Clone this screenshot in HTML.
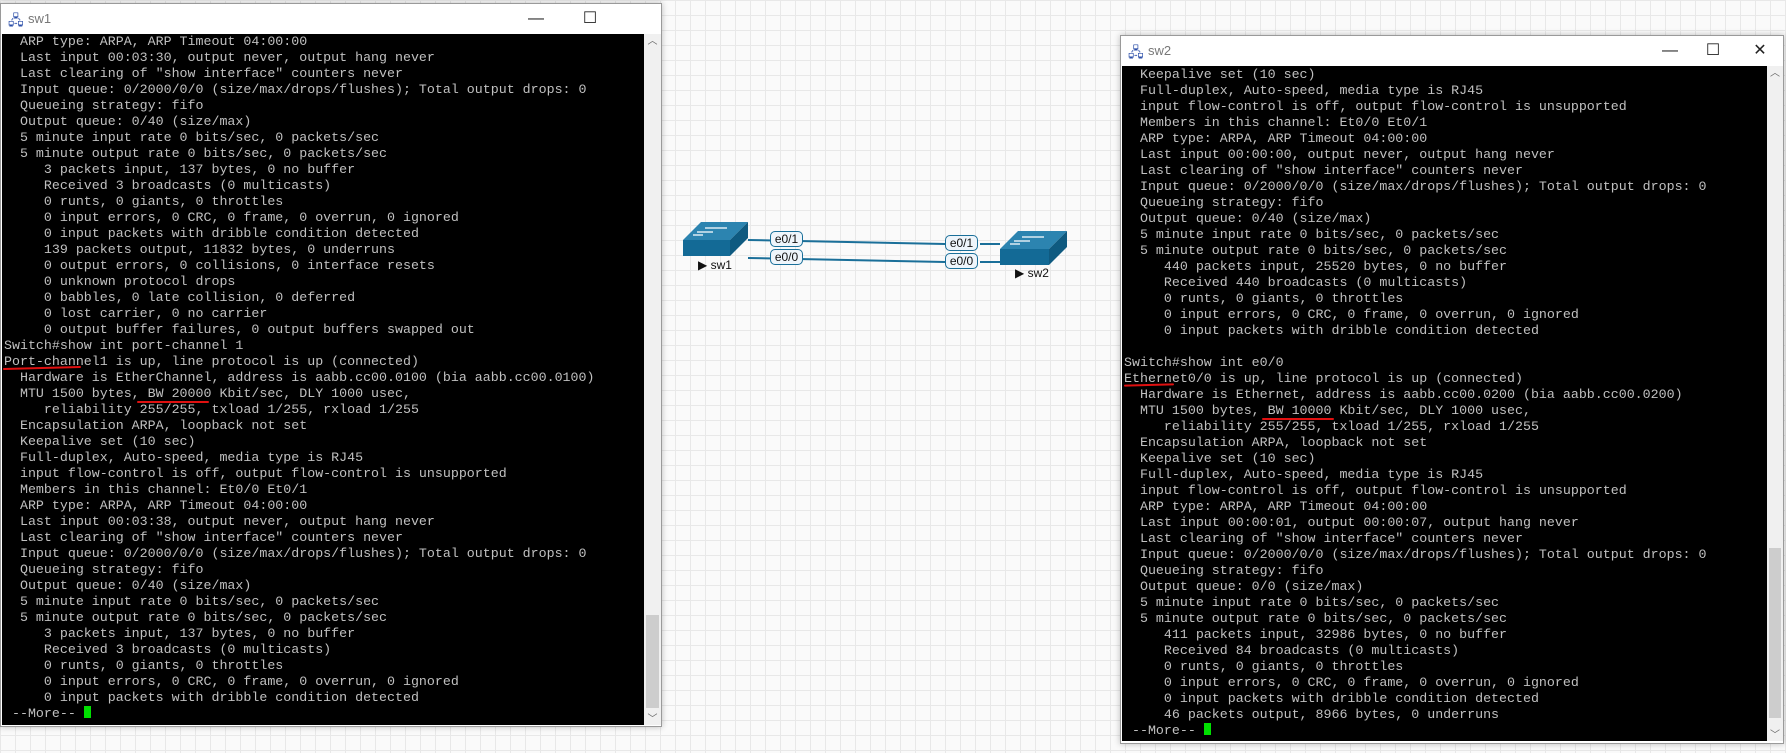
<!DOCTYPE html>
<html><head><meta charset="utf-8"><style>
body{margin:0;width:1786px;height:753px;overflow:hidden;position:relative;font-family:"Liberation Sans",sans-serif;
background-color:#fafafa;background-image:linear-gradient(#e8e8e8 1px,transparent 1px),linear-gradient(90deg,#e8e8e8 1px,transparent 1px);background-size:15px 15px;}
.win{position:absolute;background:#fff;border:1px solid #9a9a9a;box-shadow:0 0 6px rgba(0,0,0,.25);}
.title{position:absolute;left:0;right:0;top:0;height:30px;background:#fff;}
.title .t{position:absolute;left:27px;top:7px;font-size:13px;color:#777;}
.btn{position:absolute;top:0;height:30px;width:40px;font-size:16px;color:#222;text-align:center;line-height:30px}
.term{position:absolute;background:#000;overflow:hidden;}
.term pre{margin:0;font-family:"Liberation Mono",monospace;font-size:13.3px;line-height:16px;color:#c0c0c0;padding-left:2px;}
.sb{position:absolute;background:#f0f0f0;}
.thumb{position:absolute;left:2px;right:2px;background:#cdcdcd;}
.cur{display:inline-block;width:7px;height:12px;background:#00e000;vertical-align:-1px}
.red{position:absolute;height:2px;background:#e01010;border-radius:1px}
.lbl{position:absolute;font-size:12px;border:1.5px solid #1a6f99;border-radius:5px;background:#eef5fb;width:31px;height:14px;line-height:14px;text-align:center;color:#111}
.nm{position:absolute;font-size:12px;color:#111}
</style></head><body>

<svg style="position:absolute;left:0;top:0" width="1786" height="753">
<line x1="748" y1="240" x2="945" y2="244" stroke="#1a6f99" stroke-width="2"/>
<line x1="748" y1="258" x2="945" y2="262" stroke="#1a6f99" stroke-width="2"/>
<line x1="980" y1="244" x2="1000" y2="244" stroke="#1a6f99" stroke-width="2"/>
<line x1="980" y1="262" x2="1000" y2="262" stroke="#1a6f99" stroke-width="2"/>
<g transform="translate(683,222)">
<polygon points="0,18 18,0 65,0 47,18" fill="#2c84b0"/>
<polygon points="0,18 47,18 47,34 0,34" fill="#136a96"/>
<polygon points="47,18 65,0 65,16 47,34" fill="#0f5a80"/>
<path d="M22,6 h16 M30,10 h-16 M28,6 h16 M20,13 h-10" stroke="#fff" stroke-width="1.3"/>
</g>
<g transform="translate(1000,231)">
<polygon points="0,18 18,0 67,0 49,18" fill="#2c84b0"/>
<polygon points="0,18 49,18 49,34 0,34" fill="#136a96"/>
<polygon points="49,18 67,0 67,16 49,34" fill="#0f5a80"/>
<path d="M22,6 h16 M30,10 h-16 M28,6 h16 M20,13 h-10" stroke="#fff" stroke-width="1.3"/>
</g>
</svg>
<div class="lbl" style="left:770px;top:231px">e0/1</div>
<div class="lbl" style="left:770px;top:249px">e0/0</div>
<div class="lbl" style="left:945px;top:235px">e0/1</div>
<div class="lbl" style="left:945px;top:253px">e0/0</div>
<div class="nm" style="left:698px;top:258px">▶ sw1</div>
<div class="nm" style="left:1015px;top:266px">▶ sw2</div>

<div class="win" style="left:0;top:3px;width:660px;height:722px">
<div class="title"><span style="position:absolute;left:7px;top:6px;font-size:14px;color:#2a4da8">🖧</span><span class="t">sw1</span>
<div class="btn" style="left:515px">—</div><div class="btn" style="left:569px">☐</div></div>
<div class="term" style="left:1px;top:30px;width:642px;height:691px"><pre>
  ARP type: ARPA, ARP Timeout 04:00:00
  Last input 00:03:30, output never, output hang never
  Last clearing of "show interface" counters never
  Input queue: 0/2000/0/0 (size/max/drops/flushes); Total output drops: 0
  Queueing strategy: fifo
  Output queue: 0/40 (size/max)
  5 minute input rate 0 bits/sec, 0 packets/sec
  5 minute output rate 0 bits/sec, 0 packets/sec
     3 packets input, 137 bytes, 0 no buffer
     Received 3 broadcasts (0 multicasts)
     0 runts, 0 giants, 0 throttles
     0 input errors, 0 CRC, 0 frame, 0 overrun, 0 ignored
     0 input packets with dribble condition detected
     139 packets output, 11832 bytes, 0 underruns
     0 output errors, 0 collisions, 0 interface resets
     0 unknown protocol drops
     0 babbles, 0 late collision, 0 deferred
     0 lost carrier, 0 no carrier
     0 output buffer failures, 0 output buffers swapped out
Switch#show int port-channel 1
Port-channel1 is up, line protocol is up (connected)
  Hardware is EtherChannel, address is aabb.cc00.0100 (bia aabb.cc00.0100)
  MTU 1500 bytes, BW 20000 Kbit/sec, DLY 1000 usec,
     reliability 255/255, txload 1/255, rxload 1/255
  Encapsulation ARPA, loopback not set
  Keepalive set (10 sec)
  Full-duplex, Auto-speed, media type is RJ45
  input flow-control is off, output flow-control is unsupported
  Members in this channel: Et0/0 Et0/1
  ARP type: ARPA, ARP Timeout 04:00:00
  Last input 00:03:38, output never, output hang never
  Last clearing of "show interface" counters never
  Input queue: 0/2000/0/0 (size/max/drops/flushes); Total output drops: 0
  Queueing strategy: fifo
  Output queue: 0/40 (size/max)
  5 minute input rate 0 bits/sec, 0 packets/sec
  5 minute output rate 0 bits/sec, 0 packets/sec
     3 packets input, 137 bytes, 0 no buffer
     Received 3 broadcasts (0 multicasts)
     0 runts, 0 giants, 0 throttles
     0 input errors, 0 CRC, 0 frame, 0 overrun, 0 ignored
     0 input packets with dribble condition detected
 --More-- <span class="cur"></span></pre></div>
<div class="sb" style="left:643px;top:30px;width:17px;height:691px"><div style="text-align:center;font-size:10px;color:#666;line-height:16px">︿</div><div class="thumb" style="top:581px;height:93px"></div><div style="position:absolute;bottom:0;width:17px;text-align:center;font-size:10px;color:#666">﹀</div></div>
</div>
<div class="red" style="left:3px;top:367px;width:78px;transform:rotate(-1.5deg)"></div>
<div class="red" style="left:137px;top:401px;width:72px"></div>

<div class="win" style="left:1120px;top:35px;width:662px;height:707px">
<div class="title"><span style="position:absolute;left:7px;top:6px;font-size:14px;color:#2a4da8">🖧</span><span class="t">sw2</span>
<div class="btn" style="left:529px">—</div><div class="btn" style="left:572px">☐</div><div class="btn" style="left:619px">✕</div></div>
<div class="term" style="left:1px;top:30px;width:645px;height:675px"><pre style="padding-top:1px">
  Keepalive set (10 sec)
  Full-duplex, Auto-speed, media type is RJ45
  input flow-control is off, output flow-control is unsupported
  Members in this channel: Et0/0 Et0/1
  ARP type: ARPA, ARP Timeout 04:00:00
  Last input 00:00:00, output never, output hang never
  Last clearing of "show interface" counters never
  Input queue: 0/2000/0/0 (size/max/drops/flushes); Total output drops: 0
  Queueing strategy: fifo
  Output queue: 0/40 (size/max)
  5 minute input rate 0 bits/sec, 0 packets/sec
  5 minute output rate 0 bits/sec, 0 packets/sec
     440 packets input, 25520 bytes, 0 no buffer
     Received 440 broadcasts (0 multicasts)
     0 runts, 0 giants, 0 throttles
     0 input errors, 0 CRC, 0 frame, 0 overrun, 0 ignored
     0 input packets with dribble condition detected

Switch#show int e0/0
Ethernet0/0 is up, line protocol is up (connected)
  Hardware is Ethernet, address is aabb.cc00.0200 (bia aabb.cc00.0200)
  MTU 1500 bytes, BW 10000 Kbit/sec, DLY 1000 usec,
     reliability 255/255, txload 1/255, rxload 1/255
  Encapsulation ARPA, loopback not set
  Keepalive set (10 sec)
  Full-duplex, Auto-speed, media type is RJ45
  input flow-control is off, output flow-control is unsupported
  ARP type: ARPA, ARP Timeout 04:00:00
  Last input 00:00:01, output 00:00:07, output hang never
  Last clearing of "show interface" counters never
  Input queue: 0/2000/0/0 (size/max/drops/flushes); Total output drops: 0
  Queueing strategy: fifo
  Output queue: 0/0 (size/max)
  5 minute input rate 0 bits/sec, 0 packets/sec
  5 minute output rate 0 bits/sec, 0 packets/sec
     411 packets input, 32986 bytes, 0 no buffer
     Received 84 broadcasts (0 multicasts)
     0 runts, 0 giants, 0 throttles
     0 input errors, 0 CRC, 0 frame, 0 overrun, 0 ignored
     0 input packets with dribble condition detected
     46 packets output, 8966 bytes, 0 underruns
 --More-- <span class="cur"></span></pre></div>
<div class="sb" style="left:646px;top:30px;width:16px;height:675px"><div style="text-align:center;font-size:10px;color:#666;line-height:16px">︿</div><div class="thumb" style="top:482px;height:170px"></div><div style="position:absolute;bottom:0;width:16px;text-align:center;font-size:10px;color:#666">﹀</div></div>
</div>
<div class="red" style="left:1124px;top:384px;width:50px;transform:rotate(-1.5deg)"></div>
<div class="red" style="left:1262px;top:418px;width:72px"></div>
</body></html>
